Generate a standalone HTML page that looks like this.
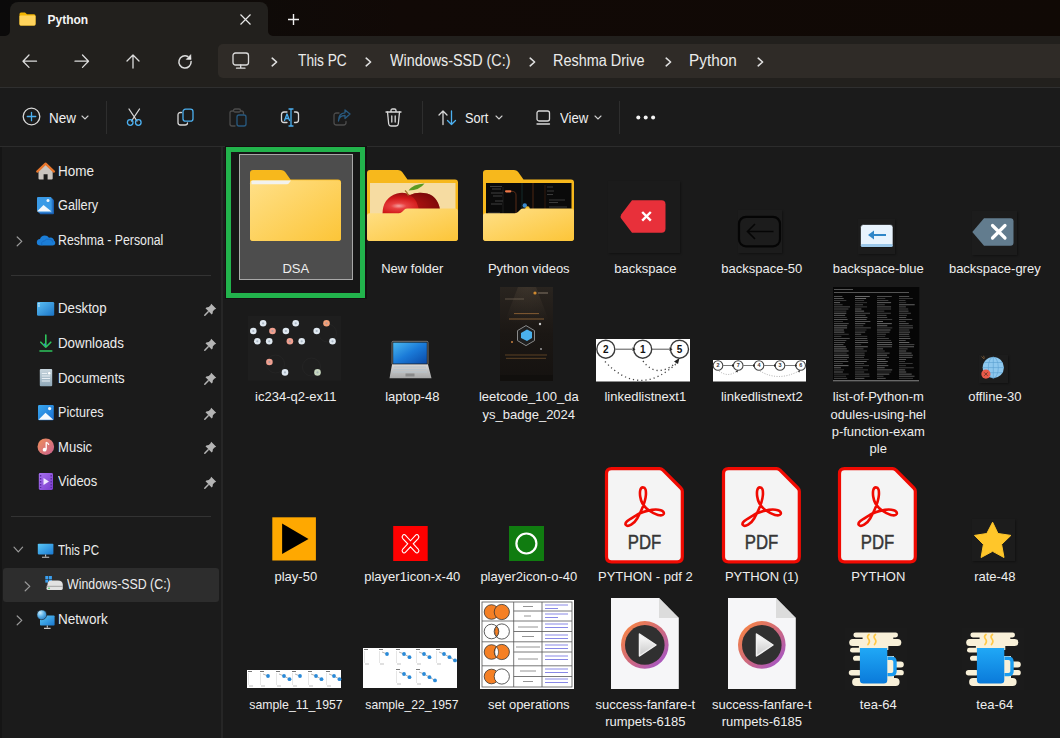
<!DOCTYPE html><html><head><meta charset="utf-8"><style>
html,body{margin:0;padding:0;width:1060px;height:738px;overflow:hidden;background:#1a1a1a;font-family:"Liberation Sans", sans-serif}
.b,.t,.i{position:absolute}
.t{white-space:nowrap}
svg{position:absolute;overflow:visible}
</style></head><body>
<div class="b" style="left:0;top:0;width:1060px;height:36px;background:linear-gradient(90deg,#0b0a0a 0px,#0e0b09 200px,#110906 400px,#100905 1060px)"></div>
<div class="b" style="left:0;top:36px;width:1060px;height:51px;background:#22201d"></div>
<div class="b" style="left:10px;top:2px;width:258px;height:40px;background:#22201d;border-radius:8px 8px 0 0"></div>
<div class="b" style="left:0;top:87px;width:1060px;height:1px;background:#2f2f2f"></div>
<div class="b" style="left:0;top:88px;width:1060px;height:58px;background:#1b1b1b"></div>
<div class="b" style="left:0;top:146px;width:1060px;height:1px;background:#2c2c2c"></div>
<div class="b" style="left:0;top:147px;width:221px;height:591px;background:#1b1b1b"></div>
<div class="b" style="left:0;top:147px;width:2px;height:591px;background:#151515"></div>
<div class="b" style="left:220.5px;top:147px;width:2px;height:591px;background:#262626"></div>
<div class="b" style="left:226px;top:147px;width:834px;height:591px;background:#1a1a1a"></div>
<svg style="left:5px;top:31px" width="5" height="5"><path d="M5 0 V5 H0 A5 5 0 0 0 5 0 Z" fill="#22201d"/></svg>
<svg style="left:268px;top:31px" width="5" height="5"><path d="M0 0 V5 H5 A5 5 0 0 1 0 0 Z" fill="#22201d"/></svg>
<svg style="left:19px;top:12px" width="17" height="14" viewBox="0 0 17 14">
      <path d="M0.5 2 Q0.5 0.5 2 0.5 H6 L8 2.2 H15 Q16.5 2.2 16.5 3.7 V12 Q16.5 13.5 15 13.5 H2 Q0.5 13.5 0.5 12 Z" fill="#f2b400"/>
      <path d="M0.5 4.5 Q0.5 3.5 1.5 3.5 H15.5 Q16.5 3.5 16.5 4.5 V12 Q16.5 13.5 15 13.5 H2 Q0.5 13.5 0.5 12 Z" fill="#ffd35c"/>
    </svg>
<div class="t" style="left:47.5px;top:13.64px;font-size:12px;line-height:12px;color:#f4f4f4;font-weight:bold;">Python</div>
<svg style="left:240px;top:14px" width="11" height="11"><path d="M0.5 0.5 L10.5 10.5 M10.5 0.5 L0.5 10.5" stroke="#e8e8e8" stroke-width="1.2"/></svg>
<svg style="left:288px;top:14px" width="11" height="11"><path d="M5.5 0 V11 M0 5.5 H11" stroke="#f0f0f0" stroke-width="1.4"/></svg>
<svg style="left:22px;top:54px" width="16" height="15"><path d="M1 7.2 H14.5 M7 1 L1 7.2 L7 13.4" stroke="#dcdcdc" stroke-width="1.3" fill="none" stroke-linecap="round" stroke-linejoin="round"/></svg>
<svg style="left:74px;top:54px" width="16" height="15"><path d="M1 7.2 H14.5 M8.5 1 L14.5 7.2 L8.5 13.4" stroke="#dcdcdc" stroke-width="1.3" fill="none" stroke-linecap="round" stroke-linejoin="round"/></svg>
<svg style="left:126px;top:54px" width="15" height="15"><path d="M7 1 V14 M1 7 L7 1 L13 7" stroke="#dcdcdc" stroke-width="1.3" fill="none" stroke-linecap="round" stroke-linejoin="round"/></svg>
<svg style="left:172px;top:50px" width="26" height="24"><path d="M19.1 11.6 A6.1 6.1 0 1 1 15.8 6.5" stroke="#dcdcdc" stroke-width="1.5" fill="none" stroke-linecap="round"/><path d="M18.8 4.6 L19.1 9.5 L14.2 9.4 Z" fill="#e8e8e8" stroke="#e8e8e8" stroke-width="0.5" stroke-linejoin="round"/></svg>
<div class="b" style="left:218px;top:44px;width:850px;height:34px;background:#2f2b27;border-radius:5px"></div>
<svg style="left:232px;top:52px" width="18" height="18"><rect x="1" y="1" width="15.5" height="12" rx="2.5" stroke="#dcdcdc" stroke-width="1.3" fill="none" stroke-linecap="round" stroke-linejoin="round"/><path d="M4.5 16.2 H13 M8.7 13 V16" stroke="#dcdcdc" stroke-width="1.3" fill="none" stroke-linecap="round" stroke-linejoin="round"/></svg>
<svg style="left:270.5px;top:57px" width="8" height="11"><path d="M1.2 1.2 L5.6 5 L1.2 8.8" stroke="#e0e0e0" stroke-width="1.6" fill="none" stroke-linecap="round" stroke-linejoin="round"/></svg>
<div class="t" style="left:297.5px;top:52.96px;font-size:16px;line-height:16px;color:#ebebeb;font-weight:normal;transform:scaleX(0.857);transform-origin:0 0">This PC</div>
<svg style="left:364.5px;top:57px" width="8" height="11"><path d="M1.2 1.2 L5.6 5 L1.2 8.8" stroke="#e0e0e0" stroke-width="1.6" fill="none" stroke-linecap="round" stroke-linejoin="round"/></svg>
<div class="t" style="left:390px;top:52.96px;font-size:16px;line-height:16px;color:#ebebeb;font-weight:normal;transform:scaleX(0.897);transform-origin:0 0">Windows-SSD (C:)</div>
<svg style="left:529px;top:57px" width="8" height="11"><path d="M1.2 1.2 L5.6 5 L1.2 8.8" stroke="#e0e0e0" stroke-width="1.6" fill="none" stroke-linecap="round" stroke-linejoin="round"/></svg>
<div class="t" style="left:553px;top:52.96px;font-size:16px;line-height:16px;color:#ebebeb;font-weight:normal;transform:scaleX(0.903);transform-origin:0 0">Reshma Drive</div>
<svg style="left:665px;top:57px" width="8" height="11"><path d="M1.2 1.2 L5.6 5 L1.2 8.8" stroke="#e0e0e0" stroke-width="1.6" fill="none" stroke-linecap="round" stroke-linejoin="round"/></svg>
<div class="t" style="left:689px;top:52.96px;font-size:16px;line-height:16px;color:#ebebeb;font-weight:normal;transform:scaleX(0.958);transform-origin:0 0">Python</div>
<svg style="left:757px;top:57px" width="8" height="11"><path d="M1.2 1.2 L5.6 5 L1.2 8.8" stroke="#e0e0e0" stroke-width="1.6" fill="none" stroke-linecap="round" stroke-linejoin="round"/></svg>
<svg style="left:22px;top:107px" width="20" height="20"><circle cx="9.5" cy="9.5" r="8.3" stroke="#d8d8d8" stroke-width="1.3" fill="none" stroke-linecap="round" stroke-linejoin="round"/><path d="M9.5 5.3 V13.7 M5.3 9.5 H13.7" stroke="#4cb0f0" stroke-width="1.3" fill="none" stroke-linecap="round" stroke-linejoin="round"/></svg>
<div class="t" style="left:49px;top:111.15px;font-size:14px;line-height:14px;color:#f0f0f0;font-weight:normal;transform:scaleX(0.963);transform-origin:0 0">New</div>
<svg style="left:80.5px;top:115px" width="8" height="6"><path d="M1 1 L4 4 L7 1" stroke="#cfcfcf" stroke-width="1.1" fill="none" stroke-linecap="round"/></svg>
<div class="b" style="left:106px;top:101px;width:1px;height:33px;background:#2e2e2e"></div>
<svg style="left:126px;top:108px" width="18" height="19"><path d="M3 1 L11 13 M13.5 1 L5.5 13" stroke="#d8d8d8" stroke-width="1.3" fill="none" stroke-linecap="round" stroke-linejoin="round"/><circle cx="4.2" cy="14.5" r="2.8" stroke="#4cb0f0" stroke-width="1.3" fill="none" stroke-linecap="round" stroke-linejoin="round"/><circle cx="12.3" cy="14.5" r="2.8" stroke="#4cb0f0" stroke-width="1.3" fill="none" stroke-linecap="round" stroke-linejoin="round"/></svg>
<svg style="left:177px;top:108px" width="19" height="19"><path d="M4.5 4.5 H3.5 Q1 4.5 1 7 V14.5 Q1 17 3.5 17 H8 Q10.5 17 10.5 15" stroke="#d8d8d8" stroke-width="1.3" fill="none" stroke-linecap="round" stroke-linejoin="round"/><rect x="6" y="1.2" width="10" height="12" rx="2.5" stroke="#4cb0f0" stroke-width="1.3" fill="none" stroke-linecap="round" stroke-linejoin="round"/></svg>
<svg style="left:229px;top:108px" width="19" height="20"><path d="M4 3 H3 Q1 3 1 5 V16 Q1 18 3 18 H6" stroke="#4c4c4c" stroke-width="1.3" fill="none" stroke-linecap="round" stroke-linejoin="round"/><rect x="4.5" y="1" width="7" height="3" rx="1.5" stroke="#4c4c4c" stroke-width="1.3" fill="none" stroke-linecap="round" stroke-linejoin="round"/><path d="M11.5 3 H12.5 Q14.5 3 14.5 5 V6" stroke="#4c4c4c" stroke-width="1.3" fill="none" stroke-linecap="round" stroke-linejoin="round"/><rect x="8" y="7" width="9" height="11" rx="2" stroke="#285a80" stroke-width="1.3" fill="none" stroke-linecap="round" stroke-linejoin="round"/></svg>
<svg style="left:280px;top:108px" width="21" height="20"><path d="M7 4 H4 Q1.5 4 1.5 6.5 V12 Q1.5 14.5 4 14.5 H7 M14.5 4 H16 Q18.5 4 18.5 6.5 V12 Q18.5 14.5 16 14.5 H14.5" stroke="#d8d8d8" stroke-width="1.3" fill="none" stroke-linecap="round" stroke-linejoin="round"/><path d="M11 1 V18 M9 1 H13 M9 18 H13" stroke="#4cb0f0" stroke-width="1.3" fill="none" stroke-linecap="round" stroke-linejoin="round"/><path d="M4.5 12.5 L7 6 L9.5 12.5 M5.5 10.5 H8.5" stroke="#4cb0f0" stroke-width="1.3" fill="none" stroke-linecap="round" stroke-linejoin="round"/></svg>
<svg style="left:333px;top:109px" width="19" height="18"><path d="M6 4 H3.5 Q1 4 1 6.5 V13.5 Q1 16 3.5 16 H10.5 Q13 16 13 13.5 V12.5" stroke="#4c4c4c" stroke-width="1.3" fill="none" stroke-linecap="round" stroke-linejoin="round"/><path d="M5.5 12 Q6 6.5 12 6.5 V9.5 L17 5 L12 1 V3.8 Q5.5 4 5.5 12 Z" stroke="#285a80" stroke-width="1.3" fill="none" stroke-linecap="round" stroke-linejoin="round"/></svg>
<svg style="left:385px;top:108px" width="18" height="20"><path d="M1 4 H16 M6 4 V2.5 Q6 1 7.5 1 H9.5 Q11 1 11 2.5 V4" stroke="#d8d8d8" stroke-width="1.3" fill="none" stroke-linecap="round" stroke-linejoin="round"/><path d="M2.5 4 L3.7 16 Q4 18 6 18 H11 Q13 18 13.3 16 L14.5 4" stroke="#d8d8d8" stroke-width="1.3" fill="none" stroke-linecap="round" stroke-linejoin="round"/><path d="M6.8 8 V14 M10.2 8 V14" stroke="#d8d8d8" stroke-width="1.3" fill="none" stroke-linecap="round" stroke-linejoin="round"/></svg>
<div class="b" style="left:422px;top:101px;width:1px;height:33px;background:#2e2e2e"></div>
<svg style="left:438px;top:110px" width="20" height="16"><path d="M5 14.5 V1 M1 5 L5 1 L9 5" stroke="#d8d8d8" stroke-width="1.3" fill="none" stroke-linecap="round" stroke-linejoin="round"/><path d="M13.5 1 V14.5 M9.5 10.5 L13.5 14.5 L17.5 10.5" stroke="#4cb0f0" stroke-width="1.3" fill="none" stroke-linecap="round" stroke-linejoin="round"/></svg>
<div class="t" style="left:465px;top:111.15px;font-size:14px;line-height:14px;color:#f0f0f0;font-weight:normal;transform:scaleX(0.912);transform-origin:0 0">Sort</div>
<svg style="left:495px;top:115px" width="8" height="6"><path d="M1 1 L4 4 L7 1" stroke="#cfcfcf" stroke-width="1.1" fill="none" stroke-linecap="round"/></svg>
<svg style="left:536px;top:110px" width="15" height="16"><rect x="1" y="1" width="12.5" height="10" rx="2" stroke="#d8d8d8" stroke-width="1.3" fill="none" stroke-linecap="round" stroke-linejoin="round"/><path d="M1 14 H13.5" stroke="#d8d8d8" stroke-width="1.3" fill="none" stroke-linecap="round" stroke-linejoin="round"/></svg>
<div class="t" style="left:559.5px;top:111.15px;font-size:14px;line-height:14px;color:#f0f0f0;font-weight:normal;transform:scaleX(0.94);transform-origin:0 0">View</div>
<svg style="left:593.5px;top:115px" width="8" height="6"><path d="M1 1 L4 4 L7 1" stroke="#cfcfcf" stroke-width="1.1" fill="none" stroke-linecap="round"/></svg>
<div class="b" style="left:619px;top:101px;width:1px;height:33px;background:#2e2e2e"></div>
<svg style="left:636px;top:115px" width="20" height="5"><circle cx="2.3" cy="2.5" r="2" fill="#f4f4f4"/><circle cx="9.7" cy="2.5" r="2" fill="#f4f4f4"/><circle cx="17.1" cy="2.5" r="2" fill="#f4f4f4"/></svg>
<svg style="left:36px;top:161px" width="20" height="20" viewBox="0 0 20 20">
      <path d="M2.5 9.5 V17.5 Q2.5 18.6 3.6 18.6 H7.6 V13.3 H11.6 V18.6 H15.6 Q16.7 18.6 16.7 17.5 V9.5 L9.6 3.2 Z" fill="#c9c4bf"/>
      <path d="M1.2 10.6 L9.6 2.6 L18 10.6" stroke="#e8762c" stroke-width="2.2" fill="none" stroke-linecap="round" stroke-linejoin="round"/>
    </svg>
<div class="t" style="left:58.2px;top:163.85px;font-size:14px;line-height:14px;color:#ececec;font-weight:normal;transform:scaleX(0.964);transform-origin:0 0">Home</div>
<svg style="left:36px;top:196px" width="19" height="19" viewBox="0 0 19 19">
      <rect x="3.5" y="3.5" width="14.5" height="14.8" rx="1" fill="#1a5fb0"/>
      <rect x="2.2" y="2.2" width="14.5" height="14.8" rx="1" fill="#2f7fd0"/>
      <rect x="1" y="1" width="14.5" height="14.5" rx="1" fill="#3a9ae6"/>
      <path d="M1 15.5 L7.5 9 L15.5 15.5 Z" fill="#f4f8fc"/>
      <circle cx="12" cy="4.6" r="1.5" fill="#f4f8fc"/>
    </svg>
<div class="t" style="left:58.2px;top:198.35px;font-size:14px;line-height:14px;color:#ececec;font-weight:normal;transform:scaleX(0.907);transform-origin:0 0">Gallery</div>
<svg style="left:16px;top:235.5px" width="8" height="11"><path d="M1.2 1 L5.8 5.4 L1.2 9.8" stroke="#9a9a9a" stroke-width="1.2" fill="none" stroke-linecap="round" stroke-linejoin="round"/></svg>
<svg style="left:36px;top:233px" width="20" height="13" viewBox="0 0 20 13">
      <path d="M4.5 12.5 Q0.8 12.5 0.8 9.3 Q0.8 6.3 4 6 Q5 2.5 8.8 2.5 Q11.6 2.5 13 4.7 Q13.8 4.4 14.6 4.4 Q17.6 4.6 18 7.6 Q19.5 8.5 19.3 10.3 Q19 12.5 16.5 12.5 Z" fill="#1b7ed8"/>
      <path d="M6 12.5 Q4.5 8.5 8.5 7.8 Q10 5.5 13.2 6.2 Q16.8 6.5 17 9.5" stroke="#1566bf" stroke-width="0.8" fill="none"/>
    </svg>
<div class="t" style="left:58.2px;top:232.85px;font-size:14px;line-height:14px;color:#ececec;font-weight:normal;transform:scaleX(0.879);transform-origin:0 0">Reshma - Personal</div>
<div class="b" style="left:11px;top:275px;width:200px;height:1px;background:#333333"></div>
<svg style="left:36px;top:301px" width="19" height="16" viewBox="0 0 19 16">
      <defs><linearGradient id="gdesk" x1="0" y1="0" x2="1" y2="1"><stop offset="0" stop-color="#5cc0f5"/><stop offset="1" stop-color="#1a74c6"/></linearGradient></defs>
      <rect x="1" y="1" width="17.2" height="13.8" rx="1.3" fill="url(#gdesk)"/>
      <rect x="2.2" y="2.2" width="1.5" height="1.2" fill="#dff2ff"/><rect x="2.2" y="4.4" width="1.5" height="1.2" fill="#dff2ff"/>
    </svg>
<div class="t" style="left:58.2px;top:301.35px;font-size:14px;line-height:14px;color:#ececec;font-weight:normal;transform:scaleX(0.946);transform-origin:0 0">Desktop</div>
<svg style="left:204px;top:303px" width="13" height="13" viewBox="0 0 13 13">
        <path d="M7.2 0.8 L12.2 5.8 L10.6 6.6 L8.9 8.3 L8.6 10.6 L7.7 11.5 L1.5 5.3 L2.4 4.4 L4.7 4.1 L6.4 2.4 Z" fill="#b4b4b4"/>
        <path d="M4.2 8.8 L0.8 12.2" stroke="#b4b4b4" stroke-width="1.5" stroke-linecap="round"/></svg>
<svg style="left:39px;top:334px" width="14" height="19" viewBox="0 0 14 19">
      <path d="M6.8 1 V13.2 M1.8 8.2 L6.8 13.2 L11.8 8.2" stroke="#2ec45c" stroke-width="1.6" fill="none" stroke-linecap="round" stroke-linejoin="round"/>
      <path d="M6.8 11.5 L5 9.8" stroke="#3a8fd8" stroke-width="1.2"/>
      <path d="M1 17 H12.8" stroke="#2ec45c" stroke-width="1.6" stroke-linecap="round"/>
    </svg>
<div class="t" style="left:58.2px;top:335.95px;font-size:14px;line-height:14px;color:#ececec;font-weight:normal;transform:scaleX(0.951);transform-origin:0 0">Downloads</div>
<svg style="left:204px;top:337.6px" width="13" height="13" viewBox="0 0 13 13">
        <path d="M7.2 0.8 L12.2 5.8 L10.6 6.6 L8.9 8.3 L8.6 10.6 L7.7 11.5 L1.5 5.3 L2.4 4.4 L4.7 4.1 L6.4 2.4 Z" fill="#b4b4b4"/>
        <path d="M4.2 8.8 L0.8 12.2" stroke="#b4b4b4" stroke-width="1.5" stroke-linecap="round"/></svg>
<svg style="left:39px;top:368px" width="14" height="19" viewBox="0 0 14 19">
      <defs><linearGradient id="gdoc" x1="0" y1="0" x2="0" y2="1"><stop offset="0" stop-color="#c8d6de"/><stop offset="1" stop-color="#8fa8b8"/></linearGradient></defs>
      <rect x="0.8" y="1" width="12.4" height="17.2" rx="1" fill="url(#gdoc)"/>
      <path d="M2.8 5.5 H8 M2.8 8 H11 M2.8 10.5 H11 M2.8 13 H11" stroke="#eef4f8" stroke-width="0.9"/>
      <circle cx="10.2" cy="5.2" r="1.2" fill="#fff"/>
    </svg>
<div class="t" style="left:58.2px;top:370.55px;font-size:14px;line-height:14px;color:#ececec;font-weight:normal;transform:scaleX(0.941);transform-origin:0 0">Documents</div>
<svg style="left:204px;top:372.2px" width="13" height="13" viewBox="0 0 13 13">
        <path d="M7.2 0.8 L12.2 5.8 L10.6 6.6 L8.9 8.3 L8.6 10.6 L7.7 11.5 L1.5 5.3 L2.4 4.4 L4.7 4.1 L6.4 2.4 Z" fill="#b4b4b4"/>
        <path d="M4.2 8.8 L0.8 12.2" stroke="#b4b4b4" stroke-width="1.5" stroke-linecap="round"/></svg>
<svg style="left:37px;top:404px" width="18" height="17" viewBox="0 0 18 17">
      <defs><linearGradient id="gpic" x1="0" y1="0" x2="1" y2="1"><stop offset="0" stop-color="#3aa8f0"/><stop offset="1" stop-color="#1a6fd0"/></linearGradient></defs>
      <rect x="1" y="1" width="15.8" height="15.2" rx="1.2" fill="url(#gpic)"/>
      <path d="M1.5 15.7 L8.5 8.8 L16.3 15.7 Z" fill="#f6f9fc"/>
      <circle cx="12.6" cy="4.6" r="1.6" fill="#f6f9fc"/>
    </svg>
<div class="t" style="left:58.2px;top:405.15px;font-size:14px;line-height:14px;color:#ececec;font-weight:normal;transform:scaleX(0.9);transform-origin:0 0">Pictures</div>
<svg style="left:204px;top:406.8px" width="13" height="13" viewBox="0 0 13 13">
        <path d="M7.2 0.8 L12.2 5.8 L10.6 6.6 L8.9 8.3 L8.6 10.6 L7.7 11.5 L1.5 5.3 L2.4 4.4 L4.7 4.1 L6.4 2.4 Z" fill="#b4b4b4"/>
        <path d="M4.2 8.8 L0.8 12.2" stroke="#b4b4b4" stroke-width="1.5" stroke-linecap="round"/></svg>
<svg style="left:37px;top:438px" width="18" height="18" viewBox="0 0 18 18">
      <defs><linearGradient id="gmus" x1="0" y1="0" x2="1" y2="1"><stop offset="0" stop-color="#f0905a"/><stop offset="1" stop-color="#c8608e"/></linearGradient></defs>
      <circle cx="8.8" cy="8.7" r="8.3" fill="url(#gmus)"/>
      <path d="M9.2 4.2 V11.5" stroke="#fff" stroke-width="1.3"/>
      <path d="M9.2 4.2 Q11.5 5 11.8 7" stroke="#fff" stroke-width="1.2" fill="none"/>
      <circle cx="7.6" cy="11.7" r="1.9" fill="#fff"/>
    </svg>
<div class="t" style="left:58.2px;top:439.75px;font-size:14px;line-height:14px;color:#ececec;font-weight:normal;transform:scaleX(0.934);transform-origin:0 0">Music</div>
<svg style="left:204px;top:441.4px" width="13" height="13" viewBox="0 0 13 13">
        <path d="M7.2 0.8 L12.2 5.8 L10.6 6.6 L8.9 8.3 L8.6 10.6 L7.7 11.5 L1.5 5.3 L2.4 4.4 L4.7 4.1 L6.4 2.4 Z" fill="#b4b4b4"/>
        <path d="M4.2 8.8 L0.8 12.2" stroke="#b4b4b4" stroke-width="1.5" stroke-linecap="round"/></svg>
<svg style="left:38px;top:472px" width="16" height="19" viewBox="0 0 16 19">
      <defs><linearGradient id="gvid" x1="0" y1="0" x2="1" y2="1"><stop offset="0" stop-color="#a872f0"/><stop offset="1" stop-color="#7a3ccc"/></linearGradient></defs>
      <rect x="0.8" y="1" width="14.2" height="17" rx="1.4" fill="url(#gvid)"/>
      <path d="M2.6 3 V16" stroke="#5a2aa0" stroke-width="1.4" stroke-dasharray="1.4 1.6"/>
      <path d="M13.2 3 V16" stroke="#5a2aa0" stroke-width="1.4" stroke-dasharray="1.4 1.6"/>
      <path d="M5.5 6 L11 9.5 L5.5 13 Z" fill="#f0e8ff"/>
    </svg>
<div class="t" style="left:58.2px;top:474.35px;font-size:14px;line-height:14px;color:#ececec;font-weight:normal;transform:scaleX(0.921);transform-origin:0 0">Videos</div>
<svg style="left:204px;top:476px" width="13" height="13" viewBox="0 0 13 13">
        <path d="M7.2 0.8 L12.2 5.8 L10.6 6.6 L8.9 8.3 L8.6 10.6 L7.7 11.5 L1.5 5.3 L2.4 4.4 L4.7 4.1 L6.4 2.4 Z" fill="#b4b4b4"/>
        <path d="M4.2 8.8 L0.8 12.2" stroke="#b4b4b4" stroke-width="1.5" stroke-linecap="round"/></svg>
<div class="b" style="left:11px;top:516px;width:200px;height:1px;background:#333333"></div>
<svg style="left:13px;top:546px" width="11" height="8"><path d="M1 1.2 L5.3 5.8 L9.6 1.2" stroke="#9a9a9a" stroke-width="1.2" fill="none" stroke-linecap="round" stroke-linejoin="round"/></svg>
<svg style="left:37px;top:543px" width="18" height="16" viewBox="0 0 18 16">
      <defs><linearGradient id="gpc" x1="0" y1="0" x2="1" y2="1"><stop offset="0" stop-color="#5ac8f8"/><stop offset="1" stop-color="#1a78d0"/></linearGradient></defs>
      <rect x="0.8" y="0.8" width="15.6" height="10.6" rx="0.8" fill="url(#gpc)"/>
      <path d="M8.6 11.4 V13.6 M5 14.2 H12.2" stroke="#c8c8c8" stroke-width="1.1"/>
    </svg>
<div class="t" style="left:58.2px;top:543.35px;font-size:14px;line-height:14px;color:#ececec;font-weight:normal;transform:scaleX(0.824);transform-origin:0 0">This PC</div>
<div class="b" style="left:3px;top:568px;width:216px;height:34px;background:#2d2d2d;border-radius:3px"></div>
<svg style="left:24px;top:580.5px" width="8" height="11"><path d="M1.2 1 L5.8 5.4 L1.2 9.8" stroke="#9a9a9a" stroke-width="1.2" fill="none" stroke-linecap="round" stroke-linejoin="round"/></svg>
<svg style="left:45px;top:575px" width="19" height="16" viewBox="0 0 19 16">
      <rect x="0.3" y="1" width="3" height="3" fill="#3aa0f0"/><rect x="3.9" y="1" width="3" height="3" fill="#3aa0f0"/>
      <rect x="0.3" y="4.6" width="3" height="3" fill="#3aa0f0"/><rect x="3.9" y="4.6" width="3" height="3" fill="#3aa0f0"/>
      <path d="M2.5 9.5 Q2.5 5.5 6.5 5.5 H13 Q17.5 5.5 17.8 9.5 V13.6 Q17.8 15 16.4 15 H2.8 Q1.4 15 1.4 13.6 Z" fill="#e2e2e2"/>
      <path d="M1.4 11.3 H17.8" stroke="#9a9a9a" stroke-width="0.9"/>
      <circle cx="4" cy="13.2" r="0.8" fill="#2ec45c"/>
    </svg>
<div class="t" style="left:66.9px;top:577.35px;font-size:14px;line-height:14px;color:#ececec;font-weight:normal;transform:scaleX(0.883);transform-origin:0 0">Windows-SSD (C:)</div>
<svg style="left:16px;top:615px" width="8" height="11"><path d="M1.2 1 L5.8 5.4 L1.2 9.8" stroke="#9a9a9a" stroke-width="1.2" fill="none" stroke-linecap="round" stroke-linejoin="round"/></svg>
<svg style="left:36px;top:609px" width="20" height="21" viewBox="0 0 20 21">
      <defs><linearGradient id="gnet" x1="0" y1="0" x2="1" y2="1"><stop offset="0" stop-color="#5ac8f8"/><stop offset="1" stop-color="#1a78d0"/></linearGradient>
      <radialGradient id="gglobe" cx="0.35" cy="0.3" r="0.8"><stop offset="0" stop-color="#c8ecff"/><stop offset="0.5" stop-color="#58b0e8"/><stop offset="1" stop-color="#2a78c0"/></radialGradient></defs>
      <rect x="4" y="6.5" width="14.6" height="10" rx="0.8" fill="url(#gnet)"/>
      <path d="M11.3 16.5 V18.6 M8 19.4 H14.6" stroke="#c8c8c8" stroke-width="1.1"/>
      <circle cx="5.8" cy="5.8" r="4.9" fill="url(#gglobe)" stroke="#1b1b1b" stroke-width="0.6"/>
    </svg>
<div class="t" style="left:58.2px;top:612.35px;font-size:14px;line-height:14px;color:#ececec;font-weight:normal;transform:scaleX(0.968);transform-origin:0 0">Network</div>
<div class="b" style="left:224.5px;top:146px;width:142px;height:153px;background:#141010"></div>
<div class="b" style="left:226px;top:147px;width:128.6px;height:140.7px;border:5px solid #22b34c;background:#161616"></div>
<div class="b" style="left:239px;top:153.7px;width:111.5px;height:124.8px;border:1px solid #a8a8a8;background:#4d4d4d"></div>
<svg style="left:249.5px;top:169.8px" width="92" height="72" viewBox="0 0 92 72"><defs><linearGradient id="ffdsa" x1="0" y1="0" x2="1" y2="1"><stop offset="0" stop-color="#ffe088"/><stop offset="1" stop-color="#fcc538"/></linearGradient></defs><path d="M0 3 Q0 0 3 0 H31 Q33.5 0 35 1.8 L40.5 9.5 H88 Q91 9.5 91 12.5 V68 Q91 71 88 71 H3 Q0 71 0 68 Z" fill="#f7b81c"/><path d="M0 13.2 Q0 10.2 3 10.2 H88 Q91 10.2 91 13.2 V68 Q91 71 88 71 H3 Q0 71 0 68 Z" fill="url(#ffdsa)"/><path d="M1.5 11.2 Q1.5 10.5 3 10.5 H41 L38.5 13.8 Q38 14.2 37 14.2 H1.5 Z" fill="#f2f2ee"/></svg>
<svg style="left:367px;top:169.8px" width="92" height="72" viewBox="0 0 92 72"><defs><linearGradient id="ffnf" x1="0" y1="0" x2="1" y2="1"><stop offset="0" stop-color="#ffe088"/><stop offset="1" stop-color="#fcc538"/></linearGradient></defs><path d="M0 3 Q0 0 3 0 H31 Q33.5 0 35 1.8 L40.5 9.5 H88 Q91 9.5 91 12.5 V68 Q91 71 88 71 H3 Q0 71 0 68 Z" fill="#f7b81c"/><rect x="3" y="13" width="85.5" height="31" fill="#f6dca2"/><defs><radialGradient id="gap" cx="0.28" cy="0.62" r="0.75"><stop offset="0" stop-color="#f4a0a0"/><stop offset="0.18" stop-color="#e84040"/><stop offset="0.5" stop-color="#d01818"/><stop offset="1" stop-color="#7a0808"/></radialGradient></defs><path d="M15.5 44 Q15.5 28 30 23.5 Q37.5 21.5 43 25 Q50 21.5 60 23.5 Q72.5 27 73.5 44 Z" fill="url(#gap)"/><path d="M43 25 Q50 21.5 60 23.5 Q72.5 27 73.5 44 H52 Q52 30 43 25 Z" fill="#7e0a0a" opacity="0.55"/><path d="M41.5 25.5 Q40.5 22.5 38 20.5" stroke="#a07028" stroke-width="1.3" fill="none"/><path d="M41.5 20.5 Q46 14 57.5 13.4 Q53 20 41.5 20.5 Z" fill="#5a9a22"/><path d="M0 45.5 Q0 43.2 2.5 43.2 H32 Q34 43.2 35.5 41.5 L37.5 39.5 Q38.5 38.4 40.5 38.4 H88 Q91 38.4 91 41.4 V68 Q91 71 88 71 H3 Q0 71 0 68 Z" fill="url(#ffnf)"/></svg>
<svg style="left:483.3px;top:169.8px" width="92" height="72" viewBox="0 0 92 72"><defs><linearGradient id="ffpv" x1="0" y1="0" x2="1" y2="1"><stop offset="0" stop-color="#ffe088"/><stop offset="1" stop-color="#fcc538"/></linearGradient></defs><path d="M0 3 Q0 0 3 0 H31 Q33.5 0 35 1.8 L40.5 9.5 H88 Q91 9.5 91 12.5 V68 Q91 71 88 71 H3 Q0 71 0 68 Z" fill="#f7b81c"/><rect x="3" y="13" width="85.5" height="31" fill="#0a0a0a"/><path d="M7 16.5 H19 M9 19 H18 M8 23 H20 M10 26 H19 M12 31 H20 M8 34 H19 M5 43 H17" stroke="#777" stroke-width="0.5"/><path d="M20 17 V44" stroke="#333" stroke-width="0.5"/><rect x="22" y="20.2" width="6.5" height="2.2" rx="1.1" fill="#f07848"/><path d="M28.5 21.3 Q33 21.3 33 25 V44" stroke="#8a4020" stroke-width="0.6" fill="none"/><path d="M39 13 V44" stroke="#1a4040" stroke-width="0.6"/><path d="M50 13 V44" stroke="#6a3418" stroke-width="0.7"/><path d="M64 17 H70 M64 21 H71 M64 24.5 H70 M66 30 H82 M66 32.5 H75 M66 37 H84 M66 42 H80" stroke="#6a6a6a" stroke-width="0.5"/><path d="M62 15 V44" stroke="#5a2a12" stroke-width="0.5"/><circle cx="41.8" cy="35.5" r="2.2" fill="#3a8ad0"/><circle cx="44.5" cy="38.5" r="2.2" fill="#f0c030"/><path d="M0 45.5 Q0 43.2 2.5 43.2 H32 Q34 43.2 35.5 41.5 L37.5 39.5 Q38.5 38.4 40.5 38.4 H88 Q91 38.4 91 41.4 V68 Q91 71 88 71 H3 Q0 71 0 68 Z" fill="url(#ffpv)"/></svg>
<div class="b" style="left:608px;top:180.5px;width:72px;height:72px;background:#1b1b1b;box-shadow:1px 1px 2px rgba(0,0,0,0.35)"></div>
<svg style="left:620px;top:200px" width="46" height="33" viewBox="0 0 46 33">
      <path d="M12 0.3 H41.5 Q45.5 0.3 45.5 4.3 V28.7 Q45.5 32.7 41.5 32.7 H12 L1.2 18.5 Q0 16.5 1.2 14.5 Z" fill="#e8303a"/>
      <path d="M22.2 12 L30.8 20.6 M30.8 12 L22.2 20.6" stroke="#ffffff" stroke-width="2.4"/>
    </svg>
<div class="b" style="left:738px;top:210px;width:44px;height:43px;background:#1c1c1c;box-shadow:1px 1px 2px rgba(0,0,0,0.35)"></div>
<svg style="left:737px;top:215px" width="45" height="33" viewBox="0 0 45 33">
      <rect x="2" y="1.8" width="41" height="29.5" rx="7" stroke="#050505" stroke-width="2.2" fill="none"/>
      <path d="M10.5 16.5 H36.5 M18 9 L10.5 16.5 L18 24" stroke="#050505" stroke-width="1.6" fill="none"/>
    </svg>
<div class="b" style="left:858px;top:219px;width:37px;height:35px;background:#1c1c1c;box-shadow:1px 1px 2px rgba(0,0,0,0.35)"></div>
<svg style="left:859.5px;top:224px" width="34" height="24" viewBox="0 0 34 24">
      <rect x="0.5" y="0.5" width="32.5" height="22.5" rx="3" fill="#e8f3fd" stroke="#0a0a0a" stroke-width="0.6"/>
      <rect x="0.8" y="20" width="32" height="3" rx="1.5" fill="#9cc8ea"/>
      <path d="M8 11 L14 6.5 V15.5 Z" fill="#2f86c8"/><path d="M12 11 H26" stroke="#2f86c8" stroke-width="2"/>
    </svg>
<div class="b" style="left:971.5px;top:211px;width:45px;height:44px;background:#1c1c1c;box-shadow:1px 1px 2px rgba(0,0,0,0.35)"></div>
<svg style="left:972px;top:218px" width="42" height="29" viewBox="0 0 42 29">
      <path d="M12 0.3 H38.5 Q41.5 0.3 41.5 3.3 V24.7 Q41.5 27.7 38.5 27.7 H12 L0.3 14 Z" fill="#627c8e"/>
      <path d="M20.5 7.5 L33 20 M33 7.5 L20.5 20" stroke="#ffffff" stroke-width="3.2" stroke-linecap="round"/>
    </svg>
<div class="t" style="left:235.80px;top:260.40px;width:120px;text-align:center;font-size:13px;line-height:17.4px;color:#eeeeee">DSA</div>
<div class="t" style="left:352.30px;top:260.40px;width:120px;text-align:center;font-size:13px;line-height:17.4px;color:#eeeeee">New folder</div>
<div class="t" style="left:468.80px;top:260.40px;width:120px;text-align:center;font-size:13px;line-height:17.4px;color:#eeeeee">Python videos</div>
<div class="t" style="left:585.30px;top:260.40px;width:120px;text-align:center;font-size:13px;line-height:17.4px;color:#eeeeee">backspace</div>
<div class="t" style="left:701.80px;top:260.40px;width:120px;text-align:center;font-size:13px;line-height:17.4px;color:#eeeeee">backspace-50</div>
<div class="t" style="left:818.30px;top:260.40px;width:120px;text-align:center;font-size:13px;line-height:17.4px;color:#eeeeee">backspace-blue</div>
<div class="t" style="left:934.80px;top:260.40px;width:120px;text-align:center;font-size:13px;line-height:17.4px;color:#eeeeee">backspace-grey</div>
<svg style="left:247.5px;top:316px" width="94" height="65" viewBox="247.5 316 94 65"><rect x="247.5" y="316" width="93" height="64.6" fill="#1e1e1e"/><circle cx="275" cy="364" r="9" stroke="#262626" stroke-width="0.8" fill="none"/><circle cx="311" cy="367" r="9" stroke="#262626" stroke-width="0.8" fill="none"/><circle cx="327" cy="333" r="9" stroke="#262626" stroke-width="0.8" fill="none"/><circle cx="262.6" cy="323.3" r="3.3" fill="#dfe8f0"/><circle cx="262.6" cy="323.3" r="1.1" fill="#8898a8" opacity="0.6"/><circle cx="252.8" cy="331" r="3.3" fill="#dfe8f0"/><circle cx="252.8" cy="331" r="1.1" fill="#8898a8" opacity="0.6"/><circle cx="272" cy="331" r="3.3" fill="#f0a090"/><circle cx="272" cy="331" r="1.1" fill="#8898a8" opacity="0.6"/><circle cx="285.4" cy="331" r="3.3" fill="#dfe8f0"/><circle cx="285.4" cy="331" r="1.1" fill="#8898a8" opacity="0.6"/><circle cx="295.2" cy="323.3" r="3.3" fill="#dfe8f0"/><circle cx="295.2" cy="323.3" r="1.1" fill="#8898a8" opacity="0.6"/><circle cx="326" cy="323.3" r="3.3" fill="#f2a078"/><circle cx="326" cy="323.3" r="1.1" fill="#8898a8" opacity="0.6"/><circle cx="316.2" cy="331" r="3.3" fill="#dfe8f0"/><circle cx="316.2" cy="331" r="1.1" fill="#8898a8" opacity="0.6"/><circle cx="256.8" cy="341.3" r="3.3" fill="#dfe8f0"/><circle cx="256.8" cy="341.3" r="1.1" fill="#8898a8" opacity="0.6"/><circle cx="268.7" cy="341.3" r="3.3" fill="#dfe8f0"/><circle cx="268.7" cy="341.3" r="1.1" fill="#8898a8" opacity="0.6"/><circle cx="289.4" cy="341.3" r="3.3" fill="#f0a090"/><circle cx="289.4" cy="341.3" r="1.1" fill="#8898a8" opacity="0.6"/><circle cx="301.2" cy="341.3" r="3.3" fill="#dfe8f0"/><circle cx="301.2" cy="341.3" r="1.1" fill="#8898a8" opacity="0.6"/><circle cx="332" cy="341.3" r="3.3" fill="#dfe8f0"/><circle cx="332" cy="341.3" r="1.1" fill="#8898a8" opacity="0.6"/><circle cx="268.9" cy="362" r="3.3" fill="#f0a090"/><circle cx="268.9" cy="362" r="1.1" fill="#8898a8" opacity="0.6"/><circle cx="284.5" cy="372.4" r="3.3" fill="#dfe8f0"/><circle cx="284.5" cy="372.4" r="1.1" fill="#8898a8" opacity="0.6"/><circle cx="317" cy="372.4" r="3.3" fill="#c8d8c0"/><circle cx="317" cy="372.4" r="1.1" fill="#8898a8" opacity="0.6"/></svg>
<svg style="left:388.5px;top:341px" width="43" height="38" viewBox="0 0 43 38">
      <defs><linearGradient id="glap" x1="0" y1="0" x2="1" y2="1"><stop offset="0" stop-color="#4ab8f0"/><stop offset="0.5" stop-color="#1a7ad8"/><stop offset="1" stop-color="#0a4aa8"/></linearGradient>
      <linearGradient id="gkb" x1="0" y1="0" x2="0" y2="1"><stop offset="0" stop-color="#d8d8d8"/><stop offset="1" stop-color="#a8a8a8"/></linearGradient></defs>
      <rect x="3" y="0.3" width="36" height="23.5" rx="1" fill="#1a1a1a" stroke="#b0b0b0" stroke-width="0.6"/>
      <rect x="4.2" y="1.6" width="33.6" height="21" fill="url(#glap)"/>
      <path d="M3 23.5 H39 L42.5 37.2 H0.5 Z" fill="url(#gkb)"/>
      <path d="M5 26 H37 M4.5 28.5 H37.5 M4 31 H38" stroke="#b8c4cc" stroke-width="1"/>
      <rect x="16.5" y="32.5" width="9" height="3" fill="#8a8a8a"/>
    </svg>
<svg style="left:500px;top:286.5px" width="53" height="95" viewBox="0 0 53 95">
      <defs><linearGradient id="glc" x1="0" y1="0" x2="0" y2="1"><stop offset="0" stop-color="#29241f"/><stop offset="0.5" stop-color="#1b1714"/><stop offset="1" stop-color="#151210"/></linearGradient>
      <radialGradient id="gspot" cx="0.5" cy="0" r="0.9"><stop offset="0" stop-color="#6a5a48" stop-opacity="0.5"/><stop offset="1" stop-color="#6a5a48" stop-opacity="0"/></radialGradient></defs>
      <rect x="0" y="0" width="53" height="94" fill="url(#glc)"/>
      <path d="M18 0 H36 L52 42 H2 Z" fill="url(#gspot)" opacity="0.55"/>
      <rect x="0" y="88" width="53" height="6" fill="#110f0d"/>
      <circle cx="35" cy="6" r="1.6" fill="#d08a30"/><path d="M38 6 H48" stroke="#9a8a7a" stroke-width="0.8"/>
      <path d="M5 12 H24" stroke="#7a6a5a" stroke-width="0.7"/>
      <path d="M14 26.6 H39 M9 32 H44" stroke="#9a6a38" stroke-width="0.8"/>
      <path d="M26 38.6 L34.5 43.6 V53.6 L26 58.6 L17.5 53.6 V43.6 Z" fill="#1e1e1e" stroke="#8a8a8a" stroke-width="1"/>
      <path d="M27 42.5 L32 45 V51 L27 54 L21 51 V46 Z" fill="#4ab0ec"/>
      <circle cx="12" cy="55" r="1" fill="#c88040"/><circle cx="40" cy="37" r="1.2" fill="#ccc"/><circle cx="41" cy="62" r="0.9" fill="#aaa"/>
      <path d="M5 68 H47 M6 71.3 H46" stroke="#8a6030" stroke-width="0.6"/>
    </svg>
<svg style="left:596px;top:338.5px" width="94" height="43" viewBox="0 0 94 43">
      <rect x="0" y="0" width="94" height="42.5" fill="#ffffff"/>
      <g stroke="#3a3a3a" stroke-width="1.4" fill="#fff"><circle cx="9.8" cy="10.2" r="9"/><circle cx="46.7" cy="10.2" r="9"/><circle cx="83.5" cy="10.2" r="9"/></g>
      <path d="M19.5 10.2 H36 M56 10.2 H73" stroke="#555" stroke-width="1"/>
      <path d="M36.5 8.3 L39.5 10.2 L36.5 12.1 Z M73.5 8.3 L76.5 10.2 L73.5 12.1 Z" fill="#222"/>
      <path d="M9 22.5 Q44 60 82 23" stroke="#444" stroke-width="1.3" stroke-dasharray="1.2 3" fill="none"/>
      <path d="M47 22 Q60 40 80 24" stroke="#444" stroke-width="1.3" stroke-dasharray="1.2 3" fill="none"/>
      <path d="M78 22.5 L83.5 19 L82 25 Z" fill="#222"/>
      <g font-family="Liberation Sans" font-weight="bold" font-size="10" fill="#111" text-anchor="middle"><text x="9.8" y="13.8">2</text><text x="46.7" y="13.8">1</text><text x="83.5" y="13.8">5</text></g>
    </svg>
<svg style="left:713px;top:359.5px" width="94" height="22" viewBox="0 0 94 22">
      <rect x="0" y="0" width="93" height="21.5" fill="#ffffff"/>
      <g stroke="#444" stroke-width="1.1" fill="#fff"><circle cx="5" cy="5.5" r="4.8"/><circle cx="25.2" cy="5.5" r="4.8"/><circle cx="46" cy="5.5" r="4.8"/><circle cx="67" cy="5.5" r="4.8"/><circle cx="87.7" cy="5.5" r="4.8"/></g>
      <path d="M10 5.5 H20 M30 5.5 H41 M51 5.5 H62 M72 5.5 H83" stroke="#777" stroke-width="1"/><path d="M19 4 L21 5.5 L19 7 Z M40 4 L42 5.5 L40 7 Z M61 4 L63 5.5 L61 7 Z M82 4 L84 5.5 L82 7 Z" fill="#222"/><path d="M22.5 11.5 L25 10 L24.5 12.5 Z M84.5 11.5 L87 10 L86.5 12.5 Z" fill="#222"/>
      <path d="M6 11 Q15 18 24 11 M47 11 Q65 22 86 11" stroke="#999" stroke-width="0.8" stroke-dasharray="1 1.5" fill="none"/>
      <g font-family="Liberation Sans" font-weight="bold" font-size="5.5" fill="#333" text-anchor="middle"><text x="5" y="7.3">2</text><text x="25.2" y="7.3">7</text><text x="46" y="7.3">4</text><text x="67" y="7.3">3</text><text x="87.7" y="7.3">6</text></g>
    </svg>
<svg style="left:832.5px;top:286.5px" width="87" height="95" viewBox="0 0 87 95"><rect x="0" y="0" width="86.3" height="94.4" fill="#060606"/><path d="M1 2.5 H20 M1 5.5 H76" stroke="#777" stroke-width="0.7"/><rect x="1" y="9.0" width="8.4" height="0.8" fill="#9a9a9a" opacity="0.64"/><rect x="1" y="11.1" width="9.7" height="0.8" fill="#9a9a9a" opacity="0.67"/><rect x="1" y="13.2" width="12.3" height="0.8" fill="#9a9a9a" opacity="0.43"/><rect x="1" y="15.3" width="6.1" height="0.8" fill="#9a9a9a" opacity="0.78"/><rect x="1" y="17.4" width="8.6" height="0.8" fill="#9a9a9a" opacity="0.51"/><rect x="1" y="19.5" width="16.0" height="0.8" fill="#9a9a9a" opacity="0.61"/><rect x="1" y="21.6" width="14.4" height="0.8" fill="#9a9a9a" opacity="0.61"/><rect x="1" y="23.7" width="12.4" height="0.8" fill="#9a9a9a" opacity="0.47"/><rect x="1" y="25.8" width="12.3" height="0.8" fill="#9a9a9a" opacity="0.79"/><rect x="1" y="27.9" width="11.2" height="0.8" fill="#9a9a9a" opacity="0.73"/><rect x="1" y="30.0" width="12.7" height="0.8" fill="#9a9a9a" opacity="0.43"/><rect x="1" y="32.1" width="13.6" height="0.8" fill="#9a9a9a" opacity="0.67"/><rect x="1" y="34.2" width="9.0" height="0.8" fill="#9a9a9a" opacity="0.41"/><rect x="1" y="36.3" width="14.7" height="0.8" fill="#9a9a9a" opacity="0.61"/><rect x="1" y="38.4" width="13.2" height="0.8" fill="#9a9a9a" opacity="0.80"/><rect x="1" y="40.5" width="13.1" height="0.8" fill="#9a9a9a" opacity="0.81"/><rect x="1" y="42.6" width="9.9" height="0.8" fill="#9a9a9a" opacity="0.76"/><rect x="1" y="44.7" width="10.4" height="0.8" fill="#9a9a9a" opacity="0.82"/><rect x="1" y="46.8" width="14.8" height="0.8" fill="#9a9a9a" opacity="0.44"/><rect x="1" y="48.9" width="7.4" height="0.8" fill="#9a9a9a" opacity="0.50"/><rect x="1" y="51.0" width="15.7" height="0.8" fill="#9a9a9a" opacity="0.60"/><rect x="1" y="53.1" width="12.3" height="0.8" fill="#9a9a9a" opacity="0.54"/><rect x="1" y="55.2" width="11.1" height="0.8" fill="#9a9a9a" opacity="0.57"/><rect x="1" y="57.3" width="9.5" height="0.8" fill="#9a9a9a" opacity="0.66"/><rect x="1" y="59.4" width="11.8" height="0.8" fill="#9a9a9a" opacity="0.81"/><rect x="1" y="61.5" width="12.8" height="0.8" fill="#9a9a9a" opacity="0.82"/><rect x="1" y="63.6" width="14.6" height="0.8" fill="#9a9a9a" opacity="0.85"/><rect x="1" y="65.7" width="12.7" height="0.8" fill="#9a9a9a" opacity="0.47"/><rect x="1" y="67.8" width="14.6" height="0.8" fill="#9a9a9a" opacity="0.83"/><rect x="1" y="69.9" width="15.0" height="0.8" fill="#9a9a9a" opacity="0.66"/><rect x="1" y="72.0" width="13.1" height="0.8" fill="#9a9a9a" opacity="0.50"/><rect x="1" y="74.1" width="14.3" height="0.8" fill="#9a9a9a" opacity="0.66"/><rect x="1" y="76.2" width="8.8" height="0.8" fill="#9a9a9a" opacity="0.43"/><rect x="1" y="78.3" width="14.5" height="0.8" fill="#9a9a9a" opacity="0.85"/><rect x="1" y="80.4" width="6.9" height="0.8" fill="#9a9a9a" opacity="0.76"/><rect x="1" y="82.5" width="10.1" height="0.8" fill="#9a9a9a" opacity="0.47"/><rect x="1" y="84.6" width="8.9" height="0.8" fill="#9a9a9a" opacity="0.75"/><rect x="1" y="86.7" width="14.7" height="0.8" fill="#9a9a9a" opacity="0.42"/><rect x="1" y="88.8" width="12.1" height="0.8" fill="#9a9a9a" opacity="0.42"/><rect x="1" y="90.9" width="13.2" height="0.8" fill="#9a9a9a" opacity="0.55"/><rect x="22" y="9.0" width="14.8" height="0.8" fill="#9a9a9a" opacity="0.84"/><rect x="22" y="11.1" width="11.1" height="0.8" fill="#9a9a9a" opacity="0.85"/><rect x="22" y="13.2" width="9.1" height="0.8" fill="#9a9a9a" opacity="0.43"/><rect x="22" y="15.3" width="12.0" height="0.8" fill="#9a9a9a" opacity="0.41"/><rect x="22" y="17.4" width="8.0" height="0.8" fill="#9a9a9a" opacity="0.58"/><rect x="22" y="19.5" width="12.1" height="0.8" fill="#9a9a9a" opacity="0.47"/><rect x="22" y="21.6" width="6.4" height="0.8" fill="#9a9a9a" opacity="0.79"/><rect x="22" y="23.7" width="9.1" height="0.8" fill="#9a9a9a" opacity="0.83"/><rect x="22" y="25.8" width="15.0" height="0.8" fill="#9a9a9a" opacity="0.57"/><rect x="22" y="27.9" width="10.6" height="0.8" fill="#9a9a9a" opacity="0.63"/><rect x="22" y="30.0" width="12.4" height="0.8" fill="#9a9a9a" opacity="0.67"/><rect x="22" y="32.1" width="11.6" height="0.8" fill="#9a9a9a" opacity="0.68"/><rect x="22" y="34.2" width="15.4" height="0.8" fill="#9a9a9a" opacity="0.63"/><rect x="22" y="36.3" width="10.3" height="0.8" fill="#9a9a9a" opacity="0.72"/><rect x="22" y="38.4" width="8.4" height="0.8" fill="#9a9a9a" opacity="0.54"/><rect x="22" y="40.5" width="15.8" height="0.8" fill="#9a9a9a" opacity="0.63"/><rect x="22" y="42.6" width="11.5" height="0.8" fill="#9a9a9a" opacity="0.41"/><rect x="22" y="44.7" width="10.2" height="0.8" fill="#9a9a9a" opacity="0.66"/><rect x="22" y="46.8" width="6.2" height="0.8" fill="#9a9a9a" opacity="0.68"/><rect x="22" y="48.9" width="12.3" height="0.8" fill="#9a9a9a" opacity="0.43"/><rect x="22" y="51.0" width="12.3" height="0.8" fill="#9a9a9a" opacity="0.61"/><rect x="22" y="53.1" width="12.8" height="0.8" fill="#9a9a9a" opacity="0.56"/><rect x="22" y="55.2" width="13.1" height="0.8" fill="#9a9a9a" opacity="0.73"/><rect x="22" y="57.3" width="6.2" height="0.8" fill="#9a9a9a" opacity="0.43"/><rect x="22" y="59.4" width="12.8" height="0.8" fill="#9a9a9a" opacity="0.83"/><rect x="22" y="61.5" width="8.5" height="0.8" fill="#9a9a9a" opacity="0.61"/><rect x="22" y="63.6" width="11.9" height="0.8" fill="#9a9a9a" opacity="0.54"/><rect x="22" y="65.7" width="9.6" height="0.8" fill="#9a9a9a" opacity="0.54"/><rect x="22" y="67.8" width="9.7" height="0.8" fill="#9a9a9a" opacity="0.67"/><rect x="22" y="69.9" width="9.0" height="0.8" fill="#9a9a9a" opacity="0.57"/><rect x="22" y="72.0" width="13.7" height="0.8" fill="#9a9a9a" opacity="0.41"/><rect x="22" y="74.1" width="11.7" height="0.8" fill="#9a9a9a" opacity="0.73"/><rect x="22" y="76.2" width="9.1" height="0.8" fill="#9a9a9a" opacity="0.50"/><rect x="22" y="78.3" width="14.0" height="0.8" fill="#9a9a9a" opacity="0.51"/><rect x="22" y="80.4" width="7.9" height="0.8" fill="#9a9a9a" opacity="0.60"/><rect x="22" y="82.5" width="13.0" height="0.8" fill="#9a9a9a" opacity="0.45"/><rect x="22" y="84.6" width="9.2" height="0.8" fill="#9a9a9a" opacity="0.55"/><rect x="22" y="86.7" width="14.3" height="0.8" fill="#9a9a9a" opacity="0.60"/><rect x="22" y="88.8" width="14.6" height="0.8" fill="#9a9a9a" opacity="0.48"/><rect x="22" y="90.9" width="9.4" height="0.8" fill="#9a9a9a" opacity="0.69"/><rect x="44" y="9.0" width="14.8" height="0.8" fill="#9a9a9a" opacity="0.60"/><rect x="44" y="11.1" width="8.3" height="0.8" fill="#9a9a9a" opacity="0.45"/><rect x="44" y="13.2" width="11.3" height="0.8" fill="#9a9a9a" opacity="0.49"/><rect x="44" y="15.3" width="14.1" height="0.8" fill="#9a9a9a" opacity="0.78"/><rect x="44" y="17.4" width="7.8" height="0.8" fill="#9a9a9a" opacity="0.53"/><rect x="44" y="19.5" width="14.1" height="0.8" fill="#9a9a9a" opacity="0.69"/><rect x="44" y="21.6" width="14.1" height="0.8" fill="#9a9a9a" opacity="0.56"/><rect x="44" y="23.7" width="7.3" height="0.8" fill="#9a9a9a" opacity="0.53"/><rect x="44" y="25.8" width="13.9" height="0.8" fill="#9a9a9a" opacity="0.52"/><rect x="44" y="27.9" width="9.5" height="0.8" fill="#9a9a9a" opacity="0.59"/><rect x="44" y="30.0" width="10.2" height="0.8" fill="#9a9a9a" opacity="0.58"/><rect x="44" y="32.1" width="15.2" height="0.8" fill="#9a9a9a" opacity="0.47"/><rect x="44" y="34.2" width="6.0" height="0.8" fill="#9a9a9a" opacity="0.82"/><rect x="44" y="36.3" width="14.8" height="0.8" fill="#9a9a9a" opacity="0.84"/><rect x="44" y="38.4" width="10.3" height="0.8" fill="#9a9a9a" opacity="0.83"/><rect x="44" y="40.5" width="15.3" height="0.8" fill="#9a9a9a" opacity="0.50"/><rect x="44" y="42.6" width="13.5" height="0.8" fill="#9a9a9a" opacity="0.78"/><rect x="44" y="44.7" width="12.6" height="0.8" fill="#9a9a9a" opacity="0.63"/><rect x="44" y="46.8" width="8.9" height="0.8" fill="#9a9a9a" opacity="0.55"/><rect x="44" y="48.9" width="8.3" height="0.8" fill="#9a9a9a" opacity="0.43"/><rect x="44" y="51.0" width="11.9" height="0.8" fill="#9a9a9a" opacity="0.53"/><rect x="44" y="53.1" width="14.1" height="0.8" fill="#9a9a9a" opacity="0.42"/><rect x="44" y="55.2" width="15.0" height="0.8" fill="#9a9a9a" opacity="0.71"/><rect x="44" y="57.3" width="15.2" height="0.8" fill="#9a9a9a" opacity="0.80"/><rect x="44" y="59.4" width="15.0" height="0.8" fill="#9a9a9a" opacity="0.66"/><rect x="44" y="61.5" width="6.1" height="0.8" fill="#9a9a9a" opacity="0.74"/><rect x="44" y="63.6" width="7.7" height="0.8" fill="#9a9a9a" opacity="0.53"/><rect x="44" y="65.7" width="12.6" height="0.8" fill="#9a9a9a" opacity="0.64"/><rect x="44" y="67.8" width="10.1" height="0.8" fill="#9a9a9a" opacity="0.82"/><rect x="44" y="69.9" width="12.1" height="0.8" fill="#9a9a9a" opacity="0.55"/><rect x="44" y="72.0" width="8.5" height="0.8" fill="#9a9a9a" opacity="0.79"/><rect x="44" y="74.1" width="10.8" height="0.8" fill="#9a9a9a" opacity="0.75"/><rect x="44" y="76.2" width="9.5" height="0.8" fill="#9a9a9a" opacity="0.49"/><rect x="44" y="78.3" width="11.3" height="0.8" fill="#9a9a9a" opacity="0.77"/><rect x="44" y="80.4" width="7.7" height="0.8" fill="#9a9a9a" opacity="0.76"/><rect x="44" y="82.5" width="15.2" height="0.8" fill="#9a9a9a" opacity="0.76"/><rect x="44" y="84.6" width="14.2" height="0.8" fill="#9a9a9a" opacity="0.40"/><rect x="44" y="86.7" width="12.3" height="0.8" fill="#9a9a9a" opacity="0.79"/><rect x="44" y="88.8" width="6.5" height="0.8" fill="#9a9a9a" opacity="0.52"/><rect x="44" y="90.9" width="8.7" height="0.8" fill="#9a9a9a" opacity="0.64"/><rect x="66" y="9.0" width="10.2" height="0.8" fill="#9a9a9a" opacity="0.61"/><rect x="66" y="11.1" width="13.8" height="0.8" fill="#9a9a9a" opacity="0.40"/><rect x="66" y="13.2" width="6.5" height="0.8" fill="#9a9a9a" opacity="0.46"/><rect x="66" y="15.3" width="7.2" height="0.8" fill="#9a9a9a" opacity="0.43"/><rect x="66" y="17.4" width="15.7" height="0.8" fill="#9a9a9a" opacity="0.78"/><rect x="66" y="19.5" width="6.9" height="0.8" fill="#9a9a9a" opacity="0.63"/><rect x="66" y="21.6" width="9.2" height="0.8" fill="#9a9a9a" opacity="0.54"/><rect x="66" y="23.7" width="9.5" height="0.8" fill="#9a9a9a" opacity="0.69"/><rect x="66" y="25.8" width="11.9" height="0.8" fill="#9a9a9a" opacity="0.56"/><rect x="66" y="27.9" width="7.9" height="0.8" fill="#9a9a9a" opacity="0.55"/><rect x="66" y="30.0" width="7.2" height="0.8" fill="#9a9a9a" opacity="0.65"/><rect x="66" y="32.1" width="13.2" height="0.8" fill="#9a9a9a" opacity="0.57"/><rect x="66" y="34.2" width="6.8" height="0.8" fill="#9a9a9a" opacity="0.48"/><rect x="66" y="36.3" width="9.7" height="0.8" fill="#9a9a9a" opacity="0.67"/><rect x="66" y="38.4" width="13.8" height="0.8" fill="#9a9a9a" opacity="0.57"/><rect x="66" y="40.5" width="14.0" height="0.8" fill="#9a9a9a" opacity="0.68"/><rect x="66" y="42.6" width="10.3" height="0.8" fill="#9a9a9a" opacity="0.57"/><rect x="66" y="44.7" width="11.0" height="0.8" fill="#9a9a9a" opacity="0.72"/><rect x="66" y="46.8" width="10.2" height="0.8" fill="#9a9a9a" opacity="0.71"/><rect x="66" y="48.9" width="10.6" height="0.8" fill="#9a9a9a" opacity="0.51"/><rect x="66" y="51.0" width="11.4" height="0.8" fill="#9a9a9a" opacity="0.71"/><rect x="66" y="53.1" width="6.7" height="0.8" fill="#9a9a9a" opacity="0.59"/><rect x="66" y="55.2" width="10.3" height="0.8" fill="#9a9a9a" opacity="0.80"/><rect x="66" y="57.3" width="15.4" height="0.8" fill="#9a9a9a" opacity="0.57"/><rect x="66" y="59.4" width="15.0" height="0.8" fill="#9a9a9a" opacity="0.76"/><rect x="66" y="61.5" width="8.6" height="0.8" fill="#9a9a9a" opacity="0.61"/><rect x="66" y="63.6" width="7.2" height="0.8" fill="#9a9a9a" opacity="0.77"/><rect x="66" y="65.7" width="12.6" height="0.8" fill="#9a9a9a" opacity="0.80"/><rect x="66" y="67.8" width="13.9" height="0.8" fill="#9a9a9a" opacity="0.70"/><rect x="66" y="69.9" width="13.3" height="0.8" fill="#9a9a9a" opacity="0.65"/><rect x="66" y="72.0" width="7.0" height="0.8" fill="#9a9a9a" opacity="0.66"/><rect x="66" y="74.1" width="6.0" height="0.8" fill="#9a9a9a" opacity="0.46"/><rect x="66" y="76.2" width="13.7" height="0.8" fill="#9a9a9a" opacity="0.42"/><rect x="66" y="78.3" width="6.9" height="0.8" fill="#9a9a9a" opacity="0.44"/><rect x="66" y="80.4" width="14.8" height="0.8" fill="#9a9a9a" opacity="0.48"/><rect x="66" y="82.5" width="6.2" height="0.8" fill="#9a9a9a" opacity="0.78"/><rect x="66" y="84.6" width="7.2" height="0.8" fill="#9a9a9a" opacity="0.78"/><rect x="66" y="86.7" width="12.7" height="0.8" fill="#9a9a9a" opacity="0.78"/><rect x="66" y="88.8" width="15.5" height="0.8" fill="#9a9a9a" opacity="0.66"/><rect x="66" y="90.9" width="14.0" height="0.8" fill="#9a9a9a" opacity="0.42"/><rect x="0" y="93" width="86" height="1.4" fill="#aaa" opacity="0.6"/></svg>
<div class="b" style="left:979px;top:355px;width:29px;height:28px;background:#1c1c1c;box-shadow:1px 1px 2px rgba(0,0,0,0.35)"></div>
<svg style="left:980px;top:355px" width="26" height="26" viewBox="0 0 26 26">
      <circle cx="13.3" cy="12.6" r="10.6" fill="#8ec8ee"/>
      <path d="M2.7 12.6 H23.9 M13.3 2 V23.2 M4 7.5 H22.6 M4 17.7 H22.6" stroke="#5aa0d0" stroke-width="0.6"/>
      <ellipse cx="13.3" cy="12.6" rx="5" ry="10.6" stroke="#5aa0d0" stroke-width="0.6" fill="none"/>
      <circle cx="5.9" cy="19.1" r="4.6" fill="#e85a4a"/>
      <path d="M4.2 17.4 L7.6 20.8 M7.6 17.4 L4.2 20.8" stroke="#7a3a2a" stroke-width="1"/>
      <path d="M1.5 1.5 L4 4 M3.5 0.8 L4.5 3.5" stroke="#a07040" stroke-width="0.6"/>
    </svg>
<div class="t" style="left:235.80px;top:388.10px;width:120px;text-align:center;font-size:13px;line-height:17.4px;color:#eeeeee">ic234-q2-ex11</div>
<div class="t" style="left:352.30px;top:388.10px;width:120px;text-align:center;font-size:13px;line-height:17.4px;color:#eeeeee">laptop-48</div>
<div class="t" style="left:468.80px;top:388.10px;width:120px;text-align:center;font-size:13px;line-height:17.4px;color:#eeeeee">leetcode_100_da<br>ys_badge_2024</div>
<div class="t" style="left:585.30px;top:388.10px;width:120px;text-align:center;font-size:13px;line-height:17.4px;color:#eeeeee">linkedlistnext1</div>
<div class="t" style="left:701.80px;top:388.10px;width:120px;text-align:center;font-size:13px;line-height:17.4px;color:#eeeeee">linkedlistnext2</div>
<div class="t" style="left:818.30px;top:388.10px;width:120px;text-align:center;font-size:13px;line-height:17.4px;color:#eeeeee">list-of-Python-m<br>odules-using-hel<br>p-function-exam<br>ple</div>
<div class="t" style="left:934.80px;top:388.10px;width:120px;text-align:center;font-size:13px;line-height:17.4px;color:#eeeeee">offline-30</div>
<svg style="left:271.5px;top:516.5px" width="45" height="44" viewBox="0 0 45 44">
      <rect x="0.3" y="0.3" width="43.6" height="43.2" fill="#ffa800"/>
      <path d="M10.1 6.5 V36.9 L36.5 22 Z" fill="#000000"/>
    </svg>
<svg style="left:392.5px;top:525.5px" width="35" height="35" viewBox="0 0 35 35">
      <rect x="0.2" y="0" width="34.5" height="35" fill="#ff0000"/>
      <path d="M11 8.5 L17.5 15.5 L24 8.5 M11 26.5 L17.5 19.5 L24 26.5" stroke="#ffffff" stroke-width="0" fill="none"/>
      <path d="M9.6 9.6 Q11 7.6 12.6 9.4 L17.5 14.8 L22.4 9.4 Q24 7.6 25.4 9.6 Q26.6 11 25.2 12.6 L20.3 17.8 L25.2 23 Q26.6 24.6 25.4 26 Q24 28 22.4 26.2 L17.5 20.8 L12.6 26.2 Q11 28 9.6 26 Q8.4 24.6 9.8 23 L14.7 17.8 L9.8 12.6 Q8.4 11 9.6 9.6 Z" fill="none" stroke="#ffffff" stroke-width="1.1"/>
    </svg>
<svg style="left:509px;top:525.5px" width="35" height="35" viewBox="0 0 35 35">
      <rect x="0" y="0" width="35" height="35" fill="#107c10"/>
      <circle cx="17.4" cy="17.5" r="10" stroke="#ffffff" stroke-width="2.2" fill="none"/>
    </svg>
<svg style="left:605px;top:466.5px" width="79" height="97" viewBox="0 0 79 97">
      <path d="M6.5 1.7 H54.5 Q56.5 1.7 58 3.2 L75.8 21 Q77.3 22.5 77.3 24.5 V89.8 Q77.3 94.8 72.3 94.8 H6.5 Q1.5 94.8 1.5 89.8 V6.7 Q1.5 1.7 6.5 1.7 Z" fill="#f4f4f4" stroke="#f00a02" stroke-width="3.2"/>
      <path d="M37.9 20.4 C35 20.4 34.6 25 35.2 29.5 C36 35.5 39.5 40.5 44.5 43.8 C49.5 47.5 57.2 50 58.7 47 C60 43.8 53.5 41.8 47 42.9 C41 43.9 34.5 46 30.8 48.6 C24.5 52.5 18.8 55.5 20.9 58 C23 60.5 29 57 32.5 51 C36 44.5 40.5 34 40.9 28 C41.2 23 40.5 20.4 37.9 20.4 Z" fill="none" stroke="#f00a02" stroke-width="2.6" stroke-linejoin="round"/>
      <text x="39.5" y="82.3" font-family="Liberation Sans" font-size="19.5" fill="#363636" stroke="#363636" stroke-width="0.45" text-anchor="middle" transform="translate(39.5 0) scale(0.86 1) translate(-39.5 0)">PDF</text>
    </svg>
<svg style="left:721.5px;top:466.5px" width="79" height="97" viewBox="0 0 79 97">
      <path d="M6.5 1.7 H54.5 Q56.5 1.7 58 3.2 L75.8 21 Q77.3 22.5 77.3 24.5 V89.8 Q77.3 94.8 72.3 94.8 H6.5 Q1.5 94.8 1.5 89.8 V6.7 Q1.5 1.7 6.5 1.7 Z" fill="#f4f4f4" stroke="#f00a02" stroke-width="3.2"/>
      <path d="M37.9 20.4 C35 20.4 34.6 25 35.2 29.5 C36 35.5 39.5 40.5 44.5 43.8 C49.5 47.5 57.2 50 58.7 47 C60 43.8 53.5 41.8 47 42.9 C41 43.9 34.5 46 30.8 48.6 C24.5 52.5 18.8 55.5 20.9 58 C23 60.5 29 57 32.5 51 C36 44.5 40.5 34 40.9 28 C41.2 23 40.5 20.4 37.9 20.4 Z" fill="none" stroke="#f00a02" stroke-width="2.6" stroke-linejoin="round"/>
      <text x="39.5" y="82.3" font-family="Liberation Sans" font-size="19.5" fill="#363636" stroke="#363636" stroke-width="0.45" text-anchor="middle" transform="translate(39.5 0) scale(0.86 1) translate(-39.5 0)">PDF</text>
    </svg>
<svg style="left:838px;top:466.5px" width="79" height="97" viewBox="0 0 79 97">
      <path d="M6.5 1.7 H54.5 Q56.5 1.7 58 3.2 L75.8 21 Q77.3 22.5 77.3 24.5 V89.8 Q77.3 94.8 72.3 94.8 H6.5 Q1.5 94.8 1.5 89.8 V6.7 Q1.5 1.7 6.5 1.7 Z" fill="#f4f4f4" stroke="#f00a02" stroke-width="3.2"/>
      <path d="M37.9 20.4 C35 20.4 34.6 25 35.2 29.5 C36 35.5 39.5 40.5 44.5 43.8 C49.5 47.5 57.2 50 58.7 47 C60 43.8 53.5 41.8 47 42.9 C41 43.9 34.5 46 30.8 48.6 C24.5 52.5 18.8 55.5 20.9 58 C23 60.5 29 57 32.5 51 C36 44.5 40.5 34 40.9 28 C41.2 23 40.5 20.4 37.9 20.4 Z" fill="none" stroke="#f00a02" stroke-width="2.6" stroke-linejoin="round"/>
      <text x="39.5" y="82.3" font-family="Liberation Sans" font-size="19.5" fill="#363636" stroke="#363636" stroke-width="0.45" text-anchor="middle" transform="translate(39.5 0) scale(0.86 1) translate(-39.5 0)">PDF</text>
    </svg>
<div class="b" style="left:972px;top:518.5px;width:43px;height:42px;background:#1c1c1c;box-shadow:1px 1px 2px rgba(0,0,0,0.35)"></div>
<svg style="left:972px;top:520px" width="42" height="40" viewBox="0 0 42 40">
      <path d="M20.6 2.2 L26 13.5 L38.9 15.4 L29.6 24.4 L32 37.5 L20.6 31.3 L9.1 37.5 L11.4 24.4 L2.5 15.4 L14.8 13.5 Z" fill="#ffc62a" stroke="#ffc62a" stroke-width="1" stroke-linejoin="round"/>
    </svg>
<div class="t" style="left:235.80px;top:567.80px;width:120px;text-align:center;font-size:13px;line-height:17.4px;color:#eeeeee">play-50</div>
<div class="t" style="left:352.30px;top:567.80px;width:120px;text-align:center;font-size:13px;line-height:17.4px;color:#eeeeee">player1icon-x-40</div>
<div class="t" style="left:468.80px;top:567.80px;width:120px;text-align:center;font-size:13px;line-height:17.4px;color:#eeeeee">player2icon-o-40</div>
<div class="t" style="left:585.30px;top:567.80px;width:120px;text-align:center;font-size:13px;line-height:17.4px;color:#eeeeee">PYTHON - pdf 2</div>
<div class="t" style="left:701.80px;top:567.80px;width:120px;text-align:center;font-size:13px;line-height:17.4px;color:#eeeeee">PYTHON (1)</div>
<div class="t" style="left:818.30px;top:567.80px;width:120px;text-align:center;font-size:13px;line-height:17.4px;color:#eeeeee">PYTHON</div>
<div class="t" style="left:934.80px;top:567.80px;width:120px;text-align:center;font-size:13px;line-height:17.4px;color:#eeeeee">rate-48</div>
<svg style="left:246.5px;top:669.7px" width="94" height="18" viewBox="0 0 94 18"><rect width="94" height="18" fill="#ffffff"/><path d="M1 1.5 H5" stroke="#555" stroke-width="0.8"/><path d="M1.5 3 V15" stroke="#ccc" stroke-width="0.5"/><path d="M2 16 H6" stroke="#999" stroke-width="0.6"/><path d="M13 1.5 H17" stroke="#555" stroke-width="0.8"/><path d="M13.5 3 V15" stroke="#ccc" stroke-width="0.5"/><path d="M16.0 4.0 L21.0 6.0" stroke="#666" stroke-width="0.5" fill="none"/><circle cx="21.0" cy="6.0" r="1.9" fill="#2a8ad8"/><path d="M14 16 H18" stroke="#999" stroke-width="0.6"/><path d="M29 1.5 H33" stroke="#555" stroke-width="0.8"/><path d="M29.5 3 V15" stroke="#ccc" stroke-width="0.5"/><path d="M32.0 4.0 L37.0 6.0 L42.5 9.2" stroke="#666" stroke-width="0.5" fill="none"/><circle cx="37.0" cy="6.0" r="1.9" fill="#2a8ad8"/><circle cx="42.5" cy="9.2" r="1.9" fill="#2a8ad8"/><path d="M30 16 H34" stroke="#999" stroke-width="0.6"/><path d="M45 1.5 H49" stroke="#555" stroke-width="0.8"/><path d="M45.5 3 V15" stroke="#ccc" stroke-width="0.5"/><path d="M48.0 4.0 L53.0 6.0" stroke="#666" stroke-width="0.5" fill="none"/><circle cx="53.0" cy="6.0" r="1.9" fill="#2a8ad8"/><path d="M46 16 H50" stroke="#999" stroke-width="0.6"/><path d="M61 1.5 H65" stroke="#555" stroke-width="0.8"/><path d="M61.5 3 V15" stroke="#ccc" stroke-width="0.5"/><path d="M64.0 4.0 L69.0 6.0 L74.5 9.2" stroke="#666" stroke-width="0.5" fill="none"/><circle cx="69.0" cy="6.0" r="1.9" fill="#2a8ad8"/><circle cx="74.5" cy="9.2" r="1.9" fill="#2a8ad8"/><path d="M62 16 H66" stroke="#999" stroke-width="0.6"/><path d="M79 1.5 H83" stroke="#555" stroke-width="0.8"/><path d="M79.5 3 V15" stroke="#ccc" stroke-width="0.5"/><path d="M82.0 4.0 L87.0 6.0 L92.5 9.2" stroke="#666" stroke-width="0.5" fill="none"/><circle cx="87.0" cy="6.0" r="1.9" fill="#2a8ad8"/><circle cx="92.5" cy="9.2" r="1.9" fill="#2a8ad8"/><path d="M80 16 H84" stroke="#999" stroke-width="0.6"/></svg>
<svg style="left:363.2px;top:648.2px" width="94" height="40" viewBox="0 0 94 40"><rect width="94" height="40" fill="#ffffff"/><path d="M1 1.5 H5" stroke="#555" stroke-width="0.8"/><path d="M1.5 3 V15" stroke="#ccc" stroke-width="0.5"/><path d="M2 16 H6" stroke="#999" stroke-width="0.6"/><path d="M16 1.5 H20" stroke="#555" stroke-width="0.8"/><path d="M16.5 3 V15" stroke="#ccc" stroke-width="0.5"/><path d="M19.0 4.0 L24.0 6.0" stroke="#666" stroke-width="0.5" fill="none"/><circle cx="24.0" cy="6.0" r="1.9" fill="#2a8ad8"/><path d="M17 16 H21" stroke="#999" stroke-width="0.6"/><path d="M33 1.5 H37" stroke="#555" stroke-width="0.8"/><path d="M33.5 3 V15" stroke="#ccc" stroke-width="0.5"/><path d="M36.0 4.0 L41.0 6.0 L46.5 9.2" stroke="#666" stroke-width="0.5" fill="none"/><circle cx="41.0" cy="6.0" r="1.9" fill="#2a8ad8"/><circle cx="46.5" cy="9.2" r="1.9" fill="#2a8ad8"/><path d="M34 16 H38" stroke="#999" stroke-width="0.6"/><path d="M53 1.5 H57" stroke="#555" stroke-width="0.8"/><path d="M53.5 3 V15" stroke="#ccc" stroke-width="0.5"/><path d="M56.0 4.0 L61.0 6.0 L66.5 9.2" stroke="#666" stroke-width="0.5" fill="none"/><circle cx="61.0" cy="6.0" r="1.9" fill="#2a8ad8"/><circle cx="66.5" cy="9.2" r="1.9" fill="#2a8ad8"/><path d="M54 16 H58" stroke="#999" stroke-width="0.6"/><path d="M73 1.5 H77" stroke="#555" stroke-width="0.8"/><path d="M73.5 3 V15" stroke="#ccc" stroke-width="0.5"/><path d="M76.0 4.0 L81.0 6.0 L86.5 9.2 L92.0 12.4" stroke="#666" stroke-width="0.5" fill="none"/><circle cx="81.0" cy="6.0" r="1.9" fill="#2a8ad8"/><circle cx="86.5" cy="9.2" r="1.9" fill="#2a8ad8"/><circle cx="92.0" cy="12.4" r="1.9" fill="#2a8ad8"/><path d="M74 16 H78" stroke="#999" stroke-width="0.6"/><path d="M33 21.5 H37" stroke="#555" stroke-width="0.8"/><path d="M33.5 23 V35" stroke="#ccc" stroke-width="0.5"/><path d="M36.0 24.0 L41.0 26.0 L46.5 29.2" stroke="#666" stroke-width="0.5" fill="none"/><circle cx="41.0" cy="26.0" r="1.9" fill="#2a8ad8"/><circle cx="46.5" cy="29.2" r="1.9" fill="#2a8ad8"/><path d="M34 36 H38" stroke="#999" stroke-width="0.6"/><path d="M53 21.5 H57" stroke="#555" stroke-width="0.8"/><path d="M53.5 23 V35" stroke="#ccc" stroke-width="0.5"/><path d="M56.0 24.0 L61.0 26.0 L66.5 29.2 L72.0 32.4" stroke="#666" stroke-width="0.5" fill="none"/><circle cx="61.0" cy="26.0" r="1.9" fill="#2a8ad8"/><circle cx="66.5" cy="29.2" r="1.9" fill="#2a8ad8"/><circle cx="72.0" cy="32.4" r="1.9" fill="#2a8ad8"/><path d="M54 36 H58" stroke="#999" stroke-width="0.6"/></svg>
<svg style="left:479.5px;top:599.5px" width="95" height="90" viewBox="0 0 95 90">
      <rect x="0" y="0" width="94" height="89" fill="#ffffff"/>
      <rect x="2" y="2" width="90" height="85" fill="none" stroke="#555" stroke-width="0.8"/>
      <path d="M33.7 2 V87 M62 2 V87 M2 21 H92 M2 41.8 H92 M2 65.8 H92 M33.7 11 H92 M33.7 31.5 H92 M33.7 52 H92 M33.7 76.5 H92" stroke="#555" stroke-width="0.8"/>
      <g stroke="#333" stroke-width="0.8">
        <circle cx="11.5" cy="12" r="7.3" fill="#f58025"/><circle cx="21.8" cy="12" r="7.6" fill="#f58025"/>
        <circle cx="11.5" cy="31.5" r="7.3" fill="none"/><circle cx="21.8" cy="31.5" r="7.6" fill="none"/>
        <circle cx="11.5" cy="52" r="7.3" fill="#f58025"/><circle cx="21.8" cy="52" r="7.6" fill="#f58025"/>
        <circle cx="11.5" cy="76.5" r="7.3" fill="#f58025"/><circle cx="21.8" cy="76.5" r="7.6" fill="#ffffff"/>
      </g>
      <path d="M16.6 26.2 Q20.5 31.5 16.6 36.8 Q12.7 31.5 16.6 26.2 Z" fill="#f58025" stroke="#333" stroke-width="0.6"/>
      <path d="M16.6 46.7 Q20.5 52 16.6 57.3 Q12.7 52 16.6 46.7 Z" fill="#ffffff" stroke="#333" stroke-width="0.6"/>
      <g stroke="#888" stroke-width="0.9"><path d="M43 6.5 H53 M44 16 H51 M38 27 H58 M42 36.5 H54 M36 47 H60 M38 59 H58 M40 71 H56 M43 81.5 H53"/></g>
      <g stroke="#6a6ae0" stroke-width="0.8"><path d="M65 5 H88 M65 8.5 H78 M65 14 H88 M65 17.5 H78 M65 24 H88 M65 27.5 H88 M65 35 H88 M65 38.5 H88 M65 45 H88 M65 48.5 H88 M65 56 H88 M65 59.5 H88 M65 69 H88 M65 72.5 H88 M65 79 H88 M65 82.5 H88"/></g>
    </svg>
<svg style="left:611px;top:597.5px" width="69" height="92" viewBox="0 0 69 92">
      <defs><linearGradient id="gring611" x1="0" y1="0" x2="1" y2="1"><stop offset="0" stop-color="#ff8a3a"/><stop offset="0.5" stop-color="#d06a7a"/><stop offset="1" stop-color="#9a50d8"/></linearGradient>
      <linearGradient id="gtri611" x1="0" y1="0" x2="0" y2="1"><stop offset="0" stop-color="#ffffff"/><stop offset="1" stop-color="#c8c8c8"/></linearGradient></defs>
      <path d="M0 0 H48 L67.8 20 V90.9 H0 Z" fill="#f6f6f8"/>
      <path d="M48 0 V20 H67.8 Z" fill="#dcdcdc"/>
      <circle cx="33.8" cy="46.9" r="23.8" fill="url(#gring611)"/>
      <circle cx="33.8" cy="46.9" r="19.8" fill="#303030"/>
      <path d="M28.5 36 V58 L45 47 Z" fill="url(#gtri611)" stroke="#f0f0f0" stroke-width="1.5" stroke-linejoin="round"/>
    </svg>
<svg style="left:727.5px;top:597.5px" width="69" height="92" viewBox="0 0 69 92">
      <defs><linearGradient id="gring727" x1="0" y1="0" x2="1" y2="1"><stop offset="0" stop-color="#ff8a3a"/><stop offset="0.5" stop-color="#d06a7a"/><stop offset="1" stop-color="#9a50d8"/></linearGradient>
      <linearGradient id="gtri727" x1="0" y1="0" x2="0" y2="1"><stop offset="0" stop-color="#ffffff"/><stop offset="1" stop-color="#c8c8c8"/></linearGradient></defs>
      <path d="M0 0 H48 L67.8 20 V90.9 H0 Z" fill="#f6f6f8"/>
      <path d="M48 0 V20 H67.8 Z" fill="#dcdcdc"/>
      <circle cx="33.8" cy="46.9" r="23.8" fill="url(#gring727)"/>
      <circle cx="33.8" cy="46.9" r="19.8" fill="#303030"/>
      <path d="M28.5 36 V58 L45 47 Z" fill="url(#gtri727)" stroke="#f0f0f0" stroke-width="1.5" stroke-linejoin="round"/>
    </svg>
<svg style="left:845.0px;top:628px" width="62" height="62" viewBox="0 0 62 62">
      <defs><linearGradient id="gmug848" x1="0" y1="0" x2="0" y2="1"><stop offset="0" stop-color="#20a8f6"/><stop offset="1" stop-color="#0a7ada"/></linearGradient></defs>
      <rect x="0" y="0" width="62" height="62" fill="#1b1b1b"/>
      <g fill="#f8f0d8">
        <rect x="8.4" y="4.6" width="44.6" height="4.8" rx="2.4"/>
        <rect x="4.2" y="10.9" width="52.1" height="7.1" rx="3.5"/>
        <rect x="17.6" y="8" width="30.7" height="4"/>
        <rect x="13.9" y="16" width="29.4" height="6"/>
        <rect x="5" y="19.7" width="12" height="4.9" rx="2.45"/>
        <rect x="8" y="27.7" width="9" height="5.1" rx="2.55"/>
        <rect x="3.8" y="42" width="13" height="5.5" rx="2.75"/>
        <rect x="7.1" y="50" width="47.5" height="8" rx="4"/>
        <rect x="41.7" y="33.6" width="17.1" height="5.9" rx="2.95"/>
        <rect x="41.7" y="42" width="17.1" height="5.3" rx="2.65"/>
        <rect x="41" y="28" width="8" height="22"/>
      </g>
      <path d="M24 6.5 Q21.5 8.5 23.5 11 Q25.5 13.5 23 16.5 M30.5 6.5 Q28 8.5 30 11 Q32 13.5 29.5 16.5" stroke="#ffc845" stroke-width="1.7" fill="none" stroke-linecap="round"/>
      <path d="M42.5 30.3 H46.5 Q50 30.3 50 33.8 V43.2 Q50 46.6 46.5 46.6 H42.5" stroke="#1a9cf0" stroke-width="3.4" fill="none"/>
      <path d="M14.9 20 H42.3 V52 Q42.3 55.5 38.8 55.5 H18.4 Q14.9 55.5 14.9 52 Z" fill="url(#gmug848)"/>
    </svg>
<svg style="left:961.5px;top:628px" width="62" height="62" viewBox="0 0 62 62">
      <defs><linearGradient id="gmug965" x1="0" y1="0" x2="0" y2="1"><stop offset="0" stop-color="#20a8f6"/><stop offset="1" stop-color="#0a7ada"/></linearGradient></defs>
      <rect x="0" y="0" width="62" height="62" fill="#1b1b1b"/>
      <g fill="#f8f0d8">
        <rect x="8.4" y="4.6" width="44.6" height="4.8" rx="2.4"/>
        <rect x="4.2" y="10.9" width="52.1" height="7.1" rx="3.5"/>
        <rect x="17.6" y="8" width="30.7" height="4"/>
        <rect x="13.9" y="16" width="29.4" height="6"/>
        <rect x="5" y="19.7" width="12" height="4.9" rx="2.45"/>
        <rect x="8" y="27.7" width="9" height="5.1" rx="2.55"/>
        <rect x="3.8" y="42" width="13" height="5.5" rx="2.75"/>
        <rect x="7.1" y="50" width="47.5" height="8" rx="4"/>
        <rect x="41.7" y="33.6" width="17.1" height="5.9" rx="2.95"/>
        <rect x="41.7" y="42" width="17.1" height="5.3" rx="2.65"/>
        <rect x="41" y="28" width="8" height="22"/>
      </g>
      <path d="M24 6.5 Q21.5 8.5 23.5 11 Q25.5 13.5 23 16.5 M30.5 6.5 Q28 8.5 30 11 Q32 13.5 29.5 16.5" stroke="#ffc845" stroke-width="1.7" fill="none" stroke-linecap="round"/>
      <path d="M42.5 30.3 H46.5 Q50 30.3 50 33.8 V43.2 Q50 46.6 46.5 46.6 H42.5" stroke="#1a9cf0" stroke-width="3.4" fill="none"/>
      <path d="M14.9 20 H42.3 V52 Q42.3 55.5 38.8 55.5 H18.4 Q14.9 55.5 14.9 52 Z" fill="url(#gmug965)"/>
    </svg>
<div class="t" style="left:235.80px;top:695.80px;width:120px;text-align:center;font-size:13px;line-height:17.4px;color:#eeeeee;transform:scaleX(0.945);transform-origin:50% 0">sample_11_1957</div>
<div class="t" style="left:352.30px;top:695.80px;width:120px;text-align:center;font-size:13px;line-height:17.4px;color:#eeeeee;transform:scaleX(0.935);transform-origin:50% 0">sample_22_1957</div>
<div class="t" style="left:468.80px;top:695.80px;width:120px;text-align:center;font-size:13px;line-height:17.4px;color:#eeeeee">set operations</div>
<div class="t" style="left:585.30px;top:696.00px;width:120px;text-align:center;font-size:13px;line-height:17px;color:#eeeeee">success-fanfare-t<br>rumpets-6185</div>
<div class="t" style="left:701.80px;top:696.00px;width:120px;text-align:center;font-size:13px;line-height:17px;color:#eeeeee">success-fanfare-t<br>rumpets-6185</div>
<div class="t" style="left:818.30px;top:695.80px;width:120px;text-align:center;font-size:13px;line-height:17.4px;color:#eeeeee">tea-64</div>
<div class="t" style="left:934.80px;top:695.80px;width:120px;text-align:center;font-size:13px;line-height:17.4px;color:#eeeeee">tea-64</div>
</body></html>
